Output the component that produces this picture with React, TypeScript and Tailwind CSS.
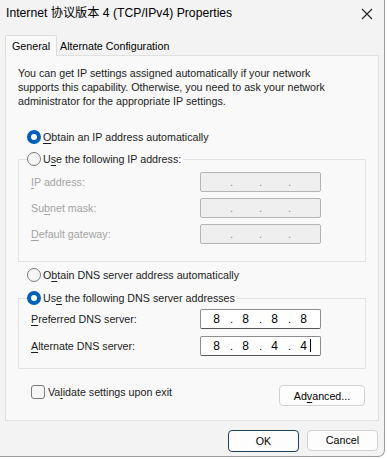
import React from 'react';

const font = { fontFamily: '"Liberation Sans", "Noto Sans CJK SC", sans-serif' };

const Radio = ({ checked }: { checked?: boolean }) =>
  checked ? (
    <span className="flex h-[14px] w-[14px] shrink-0 items-center justify-center rounded-full bg-[#005fb8]">
      <span className="h-[6px] w-[6px] rounded-full bg-white" />
    </span>
  ) : (
    <span className="h-[14px] w-[14px] shrink-0 rounded-full border border-[#7a7a7a] bg-[#f6f6f6]" />
  );

const IpBox = ({ parts, disabled, cursor }: { parts?: string[]; disabled?: boolean; cursor?: boolean }) => {
  const segs = parts ?? ['', '', '', ''];
  return (
    <div
      className={
        'flex h-[20px] w-[121px] items-center rounded-[2px] border pl-[2px] ' +
        (disabled ? 'border-[#b4b4b4] bg-[#efefef] text-[#8a8a8a]' : 'border-[#8d8d8d] border-b-[#555] bg-white text-black')
      }
    >
      {segs.map((s, i) => (
        <React.Fragment key={i}>
          <span className="relative w-[27px] text-center text-[12px] leading-none">
            {s}
            {cursor && i === 3 && <span className="absolute right-[6px] top-[-1px] h-[13px] w-px bg-black" />}
          </span>
          {i < 3 && <span className="w-[2px] text-center text-[11px] leading-none">.</span>}
        </React.Fragment>
      ))}
    </div>
  );
};

const Field = ({ label, children, disabled }: { label: React.ReactNode; children: React.ReactNode; disabled?: boolean }) => (
  <div className="flex h-[20px] items-center">
    <div className={'w-[181px] pl-[12px] ' + (disabled ? 'text-[#a3a3a3]' : 'text-[#1b1b1b]')}>{label}</div>
    {children}
  </div>
);

const U = ({ children }: { children: React.ReactNode }) => <span className="underline underline-offset-2">{children}</span>;

export default function App() {
  return (
    <div className="h-[459px] w-[387px] bg-white text-[10.7px] text-[#1b1b1b]" style={font}>
      <div className="flex h-[457px] w-[385px] flex-col rounded-br-[7px] border-r border-b border-[#9a9a9a] bg-[#f3f3f3]">
        {/* title bar */}
        <div className="flex h-[27px] items-center justify-between pl-[6px] pr-[11px]">
          <span className="text-[12.2px] text-black">Internet 协议版本 4 (TCP/IPv4) Properties</span>
          <svg width="12" height="12" viewBox="0 0 12 12" className="text-[#222]">
            <path d="M1 1 L11 11 M11 1 L1 11" stroke="currentColor" strokeWidth="1.1" />
          </svg>
        </div>

        {/* tabs */}
        <div className="mt-[8px] flex items-end pl-[5px]">
          <div className="relative z-10 -mb-px flex h-[21px] items-center rounded-t-[2px] border border-b-0 border-[#dcdcdc] bg-[#f9f9f9] px-[6px] text-black">
            General
          </div>
          <div className="flex h-[18px] items-center px-[3px] text-black">Alternate Configuration</div>
        </div>

        {/* panel */}
        <div className="mx-[5px] flex h-[366px] flex-col border border-[#e0e0e0] bg-[#f9f9f9] px-[12px]">
          <p className="mt-[10px] leading-[14px] text-[#1b1b1b]">
            You can get IP settings assigned automatically if your network
            <br />
            supports this capability. Otherwise, you need to ask your network
            <br />
            administrator for the appropriate IP settings.
          </p>

          <div className="mt-[22px] flex h-[14px] items-center gap-[2px] pl-[9px]">
            <Radio checked />
            <span>
              <U>O</U>btain an IP address automatically
            </span>
          </div>

          <fieldset className="mt-[7px] border border-[#e3e3e3] pb-[17px] pt-[5px]">
            <legend className="ml-[8px] flex items-center gap-[2px] bg-[#f9f9f9] pr-[2px]">
              <Radio />
              <span>
                U<U>s</U>e the following IP address:
              </span>
            </legend>
            <div className="flex flex-col gap-[6px]">
              <Field label={<><U>I</U>P address:</>} disabled>
                <IpBox disabled />
              </Field>
              <Field label={<>Su<U>b</U>net mask:</>} disabled>
                <IpBox disabled />
              </Field>
              <Field label={<><U>D</U>efault gateway:</>} disabled>
                <IpBox disabled />
              </Field>
            </div>
          </fieldset>

          <div className="mt-[6px] flex h-[14px] items-center gap-[2px] pl-[9px]">
            <Radio />
            <span>
              O<U>b</U>tain DNS server address automatically
            </span>
          </div>

          <fieldset className="mt-[8px] border border-[#e3e3e3] pb-[12px] pt-[3px]">
            <legend className="ml-[8px] flex items-center gap-[2px] bg-[#f9f9f9] pr-[2px]">
              <Radio checked />
              <span>
                Us<U>e</U> the following DNS server addresses
              </span>
            </legend>
            <div className="flex flex-col gap-[7px]">
              <Field label={<><U>P</U>referred DNS server:</>}>
                <IpBox parts={['8', '8', '8', '8']} />
              </Field>
              <Field label={<><U>A</U>lternate DNS server:</>}>
                <IpBox parts={['8', '8', '4', '4']} cursor />
              </Field>
            </div>
          </fieldset>

          <div className="mt-[15px] flex items-start justify-between pl-[13px] pr-[1px]">
            <div className="flex items-center gap-[3px]">
              <span className="h-[14px] w-[14px] rounded-[3px] border border-[#7a7a7a] bg-[#f6f6f6]" />
              <span>
                Va<U>l</U>idate settings upon exit
              </span>
            </div>
            <button className="mt-[1px] h-[21px] w-[86px] rounded-[4px] border border-[#d2d2d2] bg-[#fdfdfd] text-black">
              Ad<U>v</U>anced...
            </button>
          </div>
        </div>

        {/* footer */}
        <div className="mt-[9px] flex justify-end gap-[8px] pr-[6px]">
          <button className="h-[22px] w-[71px] rounded-[4px] border border-[#1f3f5f] bg-[#fdfdfd] text-black">OK</button>
          <button className="h-[21px] w-[71px] rounded-[4px] border border-[#d2d2d2] bg-[#fdfdfd] text-black">Cancel</button>
        </div>
      </div>
    </div>
  );
}
